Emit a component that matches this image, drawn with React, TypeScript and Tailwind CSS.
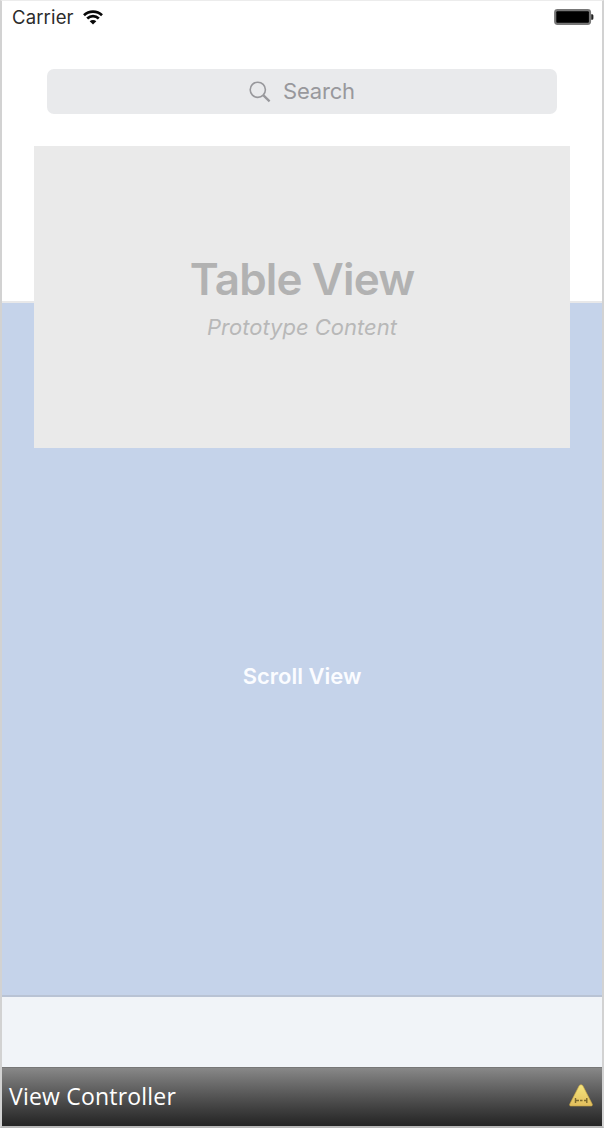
import React from "react";

function StatusBar() {
  return (
    <div className="flex h-8 items-center justify-between pl-[10px] pr-[8px]">
      <div className="flex items-center gap-[9px]">
        <span className="text-[18.5px] leading-8 tracking-[0.15px] text-[#2b2b2b]">Carrier</span>
        <svg width="20" height="15" viewBox="0 0 20 15" fill="none" stroke="#080808" strokeWidth="2.7">
          <path d="M1 5.2C6 .4 14 .4 19 5.2" />
          <path d="M4.2 8.6c3.4-3.2 8.2-3.2 11.6 0" />
          <path d="M6.700 11.300c1.800-1.700 4.800-1.700 6.600 0L10 14.500Z" fill="#080808" stroke="none" />
        </svg>
      </div>
      <svg width="40" height="16" viewBox="0 0 40 16">
        <rect x="0.9" y="0.9" width="35.4" height="14.2" rx="2.6" fill="#777" stroke="#777" strokeWidth="1.6" />
        <rect x="2.300" y="2.300" width="32.600" height="11.400" rx="1" fill="#000" />
        <path d="M37.2 5.2h.6c1 0 1.6.7 1.6 1.6v2.4c0 .9-.6 1.6-1.6 1.6h-.6z" fill="#222" />
      </svg>
    </div>
  );
}

function SearchField() {
  return (
    <div className="mx-[45px] mt-[36px] flex h-[45px] items-center justify-center gap-[12px] rounded-[7px] bg-[#e9eaec] text-[#98989c]">
      <svg width="22" height="22" viewBox="0 0 22 22" fill="none" stroke="#98989c">
        <circle cx="8.8" cy="8.8" r="7.6" strokeWidth="1.6" />
        <path d="m14.2 14.2 6.4 6.2" strokeWidth="2.3" />
      </svg>
      <span className="pb-[2px] text-[22px] leading-[42px] tracking-[-0.2px]">Search</span>
    </div>
  );
}

function TableView() {
  return (
    <div className="absolute left-[32px] top-[145px] flex h-[302px] w-[536px] flex-col items-center bg-[#eaeaea] pt-[106px]">
      <h1 className="text-[44px] font-semibold leading-[54px] tracking-[-0.85px] text-[#b2b2b2]">Table View</h1>
      <p className="mt-[7px] text-[22px] italic leading-[28px] text-[#b8b8b8]">Prototype Content</p>
    </div>
  );
}

function WarningIcon() {
  return (
    <svg className="mb-[3px]" width="24" height="23" viewBox="0 0 24 23">
      <defs>
        <linearGradient id="warning" x1="0" y1="0" x2="0" y2="1">
          <stop offset="0" stopColor="#f6e67e" />
          <stop offset="1" stopColor="#e2be5c" />
        </linearGradient>
      </defs>
      <path d="M10.1 1.800c.8-1.400 3-1.400 3.800 0l9.300 18.100c.6 1.200 0 2.100-1.300 2.100H2.100C.8 22 .2 21.100.8 19.900Z" fill="url(#warning)" stroke="#c7a545" strokeWidth="0.6" />
      <path d="M6.500 14v5M17.800 14v5M7 16.500h3M11 16.500h2.500M15 16.500h3" stroke="#7d6a2e" strokeWidth="1.4" />
    </svg>
  );
}

export default function App() {
  return (
    <div className="h-[1128px] w-[604px] overflow-hidden border-x-2 border-b-2 border-t border-b-[#b8b8b8] border-l-[#d2d2d2] border-r-[#d2d2d2] border-t-[#ececec] bg-white font-['Inter',sans-serif]">
      <div className="relative flex h-full flex-col">
        <header className="h-[302px] shrink-0 border-b-2 border-[#e8e8e9] bg-white">
          <StatusBar />
          <SearchField />
        </header>
        <main className="flex h-[694px] shrink-0 justify-center border-b-2 border-[#b9c3d4] bg-[#c5d3ea] pt-[359px]">
          <span className="text-[22px] font-semibold leading-[28px] text-[#fbfcff]">Scroll View</span>
        </main>
        <div className="h-[70px] shrink-0 bg-[#f1f4f8]" />
        <footer className="flex min-h-0 flex-1 items-center justify-between border-t border-[#777] bg-linear-to-b from-[#888] to-[#242424] pl-[7px] pr-[9px] font-['Open_Sans',sans-serif]">
          <span className="mb-[3px] text-[23px] leading-[30px] tracking-[0.2px] text-white">View Controller</span>
          <WarningIcon />
        </footer>
        <TableView />
      </div>
    </div>
  );
}
